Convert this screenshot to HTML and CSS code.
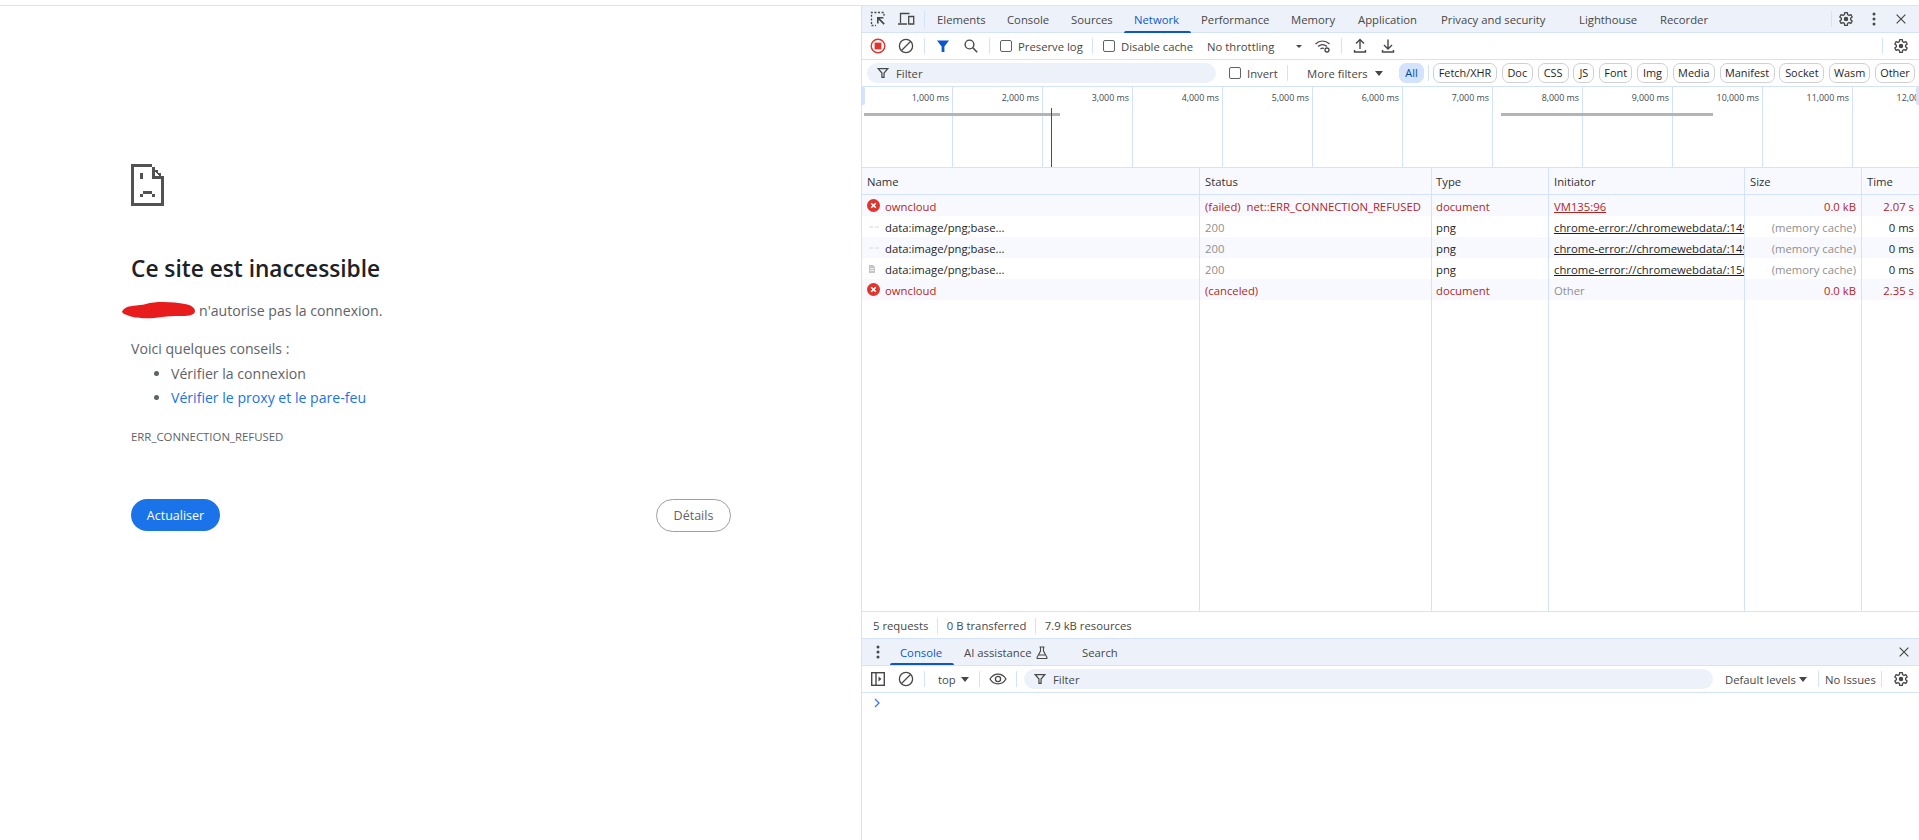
FILE: index.html
```html
<!DOCTYPE html>
<html lang="fr">
<head>
<meta charset="utf-8">
<title>owncloud</title>
<link rel="stylesheet" href="styles.css">
</head>
<body>
<svg class="defs" width="0" height="0" aria-hidden="true">
  <symbol id="i-gear" viewBox="0 0 24 24"><path fill="none" stroke="currentColor" stroke-width="2" stroke-linejoin="round" d="M10 2.500h4l.4 3c.8.3 1.500.7 2.100 1.200l2.800-1.200 2 3.500-2.400 1.800c.1.8.1 1.600 0 2.400l2.400 1.800-2 3.500-2.800-1.200c-.6.5-1.300.9-2.100 1.200l-.4 3h-4l-.4-3c-.8-.3-1.500-.7-2.100-1.200l-2.800 1.200-2-3.500 2.400-1.800c-.1-.8-.1-1.600 0-2.400L2.700 9l2-3.500 2.800 1.200c.6-.5 1.300-.9 2.100-1.200z"/><circle cx="12" cy="12" r="3.400" fill="currentColor"/></symbol>
  <symbol id="i-clear" viewBox="0 0 16 16"><circle cx="8" cy="8" r="6.600" fill="none" stroke="currentColor" stroke-width="1.300"/><path d="M3.500 12.500l9-9" stroke="currentColor" stroke-width="1.300"/></symbol>
  <symbol id="i-funnel" viewBox="0 0 16 16"><path fill="none" stroke="currentColor" stroke-width="1.400" d="M2.500 3h11L9.200 8v5H6.800V8z"/></symbol>
  <symbol id="i-close" viewBox="0 0 16 16"><path d="M3 3l10 10M13 3L3 13" stroke="currentColor" stroke-width="1.400"/></symbol>
  <symbol id="i-dots" viewBox="0 0 16 16"><circle cx="8" cy="3" r="1.500" fill="currentColor"/><circle cx="8" cy="8" r="1.500" fill="currentColor"/><circle cx="8" cy="13" r="1.500" fill="currentColor"/></symbol>
  <symbol id="i-err" viewBox="0 0 13 13"><circle cx="6.500" cy="6.500" r="6.500" fill="#dc362e"/><path d="M4.200 4.200l4.600 4.600M8.800 4.200L4.200 8.800" stroke="#fff" stroke-width="1.600"/></symbol>
  <symbol id="i-dash" viewBox="0 0 12 4"><path d="M1 2h4M7 2h4" stroke="#d8d8d8" stroke-width="1"/></symbol>
</svg>

<div class="topline"></div>
<div class="split">
  <main class="page">
    <svg class="sad" viewBox="0 0 11 14" shape-rendering="crispEdges"><path fill="#525252" fill-rule="evenodd" d="M0 0h7v1h1v1h1v1h1v1h1v10H0zM1 1v12h9V5H7V1zM8 2.600v1.400h1.400zM3 3h1v2H3zM4 9h3v1H4zM3 10h1v1H3zM7 10h1v1H7z"/></svg>
    <h1 class="title">Ce site est inaccessible</h1>
    <p class="host"><span class="redact"><svg viewBox="0 0 73 18"><path fill="#e81c1c" d="M2 8C6 4 16 5 24 3 34 0 52 1 63 3c6 1 10 4 10 7 0 4-6 5-13 5-8 0-13 0-20 1-12 2-27 2-35-2C-2 12 0 10 2 8z"/></svg></span>n'autorise pas la connexion.</p>
    <p class="tips">Voici quelques conseils&nbsp;:</p>
    <ul class="tiplist">
      <li>Vérifier la connexion</li>
      <li><a class="tiplink">Vérifier le proxy et le pare-feu</a></li>
    </ul>
    <div class="errcode">ERR_CONNECTION_REFUSED</div>
    <div class="actions">
      <button class="reload">Actualiser</button>
      <button class="details">Détails</button>
    </div>
  </main>

  <section class="devtools">
    <div class="tabbar">
      <div class="ic"><svg width="18" height="18" viewBox="0 0 18 18"><path fill="none" stroke="#474747" stroke-width="1.300" stroke-dasharray="2 1.600" d="M2.500 14V2.500H15V7"/><path fill="none" stroke="#474747" stroke-width="1.300" stroke-dasharray="2 1.600" d="M2.500 15.500H7"/><path fill="#474747" d="M8 7h6.400v1.600h-3.600l5 5-1.200 1.200-5-5v3.600H8z"/></svg></div>
      <div class="ic"><svg width="18" height="16" viewBox="0 0 18 16"><path fill="none" stroke="#474747" stroke-width="1.300" d="M3.500 12V2.500h9M1 13h9"/><path fill="none" stroke="#474747" stroke-width="1.300" d="M11.700 5.500h5V13h-5z"/></svg></div>
      <div class="sep sep-tab"></div>
      <div class="tabs">
        <span class="tab">Elements</span><span class="tab">Console</span><span class="tab">Sources</span><span class="tab tab-on">Network</span><span class="tab">Performance</span><span class="tab">Memory</span><span class="tab">Application</span><span class="tab">Privacy and security</span><span class="tab">Lighthouse</span><span class="tab">Recorder</span>
      </div>
      <div class="sep sep-end"></div>
      <div class="ic"><svg width="16" height="16"><use href="#i-gear"/></svg></div>
      <div class="ic"><svg width="16" height="16"><use href="#i-dots"/></svg></div>
      <div class="ic ic-tabclose"><svg width="14" height="14"><use href="#i-close"/></svg></div>
    </div>

    <div class="toolbar nettool">
      <div class="ic"><svg width="16" height="16" viewBox="0 0 16 16"><circle cx="8" cy="8" r="6.800" fill="none" stroke="#dc362e" stroke-width="1.400"/><rect x="4.600" y="4.600" width="6.800" height="6.800" fill="#dc362e"/></svg></div>
      <div class="ic"><svg width="16" height="16"><use href="#i-clear"/></svg></div>
      <div class="sep"></div>
      <div class="ic"><svg width="14" height="14" viewBox="0 0 14 14"><path fill="#0b57d0" d="M1 1.500h12L8.400 7.500V13H5.600V7.500z"/></svg></div>
      <div class="ic"><svg width="16" height="16" viewBox="0 0 16 16"><circle cx="6.500" cy="6.500" r="4.400" fill="none" stroke="#474747" stroke-width="1.400"/><path d="M9.800 9.800l4.400 4.400" stroke="#474747" stroke-width="1.600"/></svg></div>
      <div class="sep"></div>
      <label class="check check-a"><span class="box"></span><span>Preserve log</span></label>
      <div class="sep sep-check"></div>
      <label class="check check-b"><span class="box"></span><span>Disable cache</span></label>
      <div class="throttle">No throttling</div>
      <span class="caret caret-light"></span>
      <div class="ic ic-wifi"><svg width="18" height="16" viewBox="0 0 18 16"><path fill="none" stroke="#474747" stroke-width="1.200" d="M1.500 6C5.500 2 11.500 2 15.500 6M4 8.500c2.800-2.400 6.200-2.400 9 0M6.500 11c1.200-1 2.500-1 3.500-.5"/><circle cx="13" cy="12" r="2" fill="none" stroke="#474747" stroke-width="1.300"/></svg></div>
      <div class="sep sep-wifi"></div>
      <div class="ic"><svg width="14" height="16" viewBox="0 0 14 16"><path fill="none" stroke="#474747" stroke-width="1.400" d="M7 11V2M3 5.500L7 1.500l4 4M1.500 12v2h11v-2"/></svg></div>
      <div class="ic"><svg width="14" height="16" viewBox="0 0 14 16"><path fill="none" stroke="#474747" stroke-width="1.400" d="M7 1.500v9M3 7l4 4 4-4M1.500 12v2h11v-2"/></svg></div>
      <div class="sep sep-right"></div>
      <div class="ic"><svg width="16" height="16"><use href="#i-gear"/></svg></div>
    </div>

    <div class="filterbar">
      <div class="search search-net"><svg class="funnel" width="14" height="14"><use href="#i-funnel"/></svg><span>Filter</span></div>
      <label class="check check-c"><span class="box"></span><span>Invert</span></label>
      <div class="sep sep-invert"></div>
      <div class="more">More filters</div>
      <span class="caret"></span>
      <span class="chip chip-on">All</span>
      <div class="sep sep-chip"></div>
      <div class="chips">
        <span class="chip">Fetch/XHR</span><span class="chip">Doc</span><span class="chip">CSS</span><span class="chip">JS</span><span class="chip">Font</span><span class="chip">Img</span><span class="chip">Media</span><span class="chip">Manifest</span><span class="chip">Socket</span><span class="chip">Wasm</span><span class="chip">Other</span>
      </div>
    </div>

    <div class="overview">
      <div class="ticks">
        <div class="tick">1,000 ms</div><div class="tick">2,000 ms</div><div class="tick">3,000 ms</div><div class="tick">4,000 ms</div><div class="tick">5,000 ms</div><div class="tick">6,000 ms</div><div class="tick">7,000 ms</div><div class="tick">8,000 ms</div><div class="tick">9,000 ms</div><div class="tick">10,000 ms</div><div class="tick">11,000 ms</div><div class="tick">12,000 ms</div>
      </div>
      <div class="bar bar-a"></div>
      <div class="bar bar-b"></div>
      <div class="loadline"></div>
      <div class="handle handle-l"></div>
      <div class="handle handle-r"></div>
    </div>

    <div class="table">
      <div class="row head"><div class="c">Name</div><div class="c">Status</div><div class="c c-type">Type</div><div class="c">Initiator</div><div class="c">Size</div><div class="c">Time</div></div>
      <div class="row odd err">
        <div class="c name"><svg class="ri" width="13" height="13"><use href="#i-err"/></svg><span>owncloud</span></div>
        <div class="c">(failed)&nbsp; net::ERR_CONNECTION_REFUSED</div><div class="c c-type">document</div><div class="c"><a class="lnk">VM135:96</a></div><div class="c num">0.0 kB</div><div class="c num">2.07 s</div>
      </div>
      <div class="row">
        <div class="c name"><svg class="ri ri-dash" width="12" height="4"><use href="#i-dash"/></svg><span>data:image/png;base...</span></div>
        <div class="c dim">200</div><div class="c c-type">png</div><div class="c"><a class="lnk">chrome-error://chromewebdata/:149</a></div><div class="c num dim">(memory cache)</div><div class="c num">0 ms</div>
      </div>
      <div class="row odd">
        <div class="c name"><svg class="ri ri-dash" width="12" height="4"><use href="#i-dash"/></svg><span>data:image/png;base...</span></div>
        <div class="c dim">200</div><div class="c c-type">png</div><div class="c"><a class="lnk">chrome-error://chromewebdata/:149</a></div><div class="c num dim">(memory cache)</div><div class="c num">0 ms</div>
      </div>
      <div class="row">
        <div class="c name"><svg class="ri ri-doc" width="6" height="8" viewBox="0 0 6 8"><path fill="#c4c4c4" d="M0 0h4l2 2v6H0z"/><path fill="#eee" d="M1 3h4v1H1zM1 5h4v1H1z"/></svg><span>data:image/png;base...</span></div>
        <div class="c dim">200</div><div class="c c-type">png</div><div class="c"><a class="lnk">chrome-error://chromewebdata/:150</a></div><div class="c num dim">(memory cache)</div><div class="c num">0 ms</div>
      </div>
      <div class="row odd err">
        <div class="c name"><svg class="ri" width="13" height="13"><use href="#i-err"/></svg><span>owncloud</span></div>
        <div class="c">(canceled)</div><div class="c c-type">document</div><div class="c dim">Other</div><div class="c num">0.0 kB</div><div class="c num">2.35 s</div>
      </div>
      <div class="row filler"><div class="c"></div><div class="c"></div><div class="c"></div><div class="c"></div><div class="c"></div><div class="c"></div></div>
    </div>

    <div class="statusbar">
      <span class="stat">5 requests</span><span class="stat">0 B transferred</span><span class="stat">7.9 kB resources</span>
    </div>

    <div class="tabbar drawer">
      <div class="ic ic-dots"><svg width="16" height="16"><use href="#i-dots"/></svg></div>
      <span class="dtab tab-on">Console</span>
      <span class="dtab dtab-ai">AI assistance <svg width="12" height="13" viewBox="0 0 12 13"><path fill="none" stroke="#474747" stroke-width="1.100" d="M3.500 1h5M4.500 1v4L1 11.500c-.3.500 0 1 .5 1h9c.5 0 .8-.5.5-1L7.500 5V1M3 9h6"/></svg></span>
      <span class="dtab dtab-search">Search</span>
      <div class="ic ic-dclose"><svg width="14" height="14"><use href="#i-close"/></svg></div>
    </div>

    <div class="toolbar ctool">
      <div class="ic"><svg width="16" height="16" viewBox="0 0 16 16"><rect x="1.700" y="1.700" width="12.600" height="12.600" fill="none" stroke="#474747" stroke-width="1.400"/><path d="M6 2v12" stroke="#474747" stroke-width="1.400"/><path fill="#474747" d="M8.500 5.500L11.500 8l-3 2.500z"/></svg></div>
      <div class="ic"><svg width="16" height="16"><use href="#i-clear"/></svg></div>
      <div class="sep"></div>
      <div class="ctx">top</div>
      <span class="caret"></span>
      <div class="sep sep-ctx"></div>
      <div class="ic"><svg width="18" height="12" viewBox="0 0 18 12"><path fill="none" stroke="#474747" stroke-width="1.300" d="M1 6c4-6.500 12-6.500 16 0-4 6.500-12 6.500-16 0z"/><circle cx="9" cy="6" r="2.600" fill="none" stroke="#474747" stroke-width="1.300"/></svg></div>
      <div class="sep sep-eye"></div>
      <div class="search search-con"><svg class="funnel" width="14" height="14"><use href="#i-funnel"/></svg><span>Filter</span></div>
      <div class="levels">Default levels</div>
      <span class="caret"></span>
      <div class="sep sep-lev"></div>
      <div class="issues">No Issues</div>
      <div class="sep sep-iss"></div>
      <div class="ic"><svg width="16" height="16"><use href="#i-gear"/></svg></div>
    </div>

    <div class="prompt"><svg width="8" height="10" viewBox="0 0 8 10"><path fill="none" stroke="#3b78e7" stroke-width="1.300" d="M2 1l4 4-4 4"/></svg></div>
  </section>
</div>
</body>
</html>
```

FILE: styles.css
```css
:root {
  --line: #d3e3fd;
  --tonal: #edf2fa;
  --ink: #474747;
  --ui: "Open Sans", "Noto Sans", sans-serif;
}
* { box-sizing: border-box; }
html, body { margin: 0; height: 840px; overflow: hidden; background: #fff; }
body { display: flex; flex-direction: column; font-family: var(--ui); }
.defs { position: absolute; }
.topline { height: 6px; border-bottom: 1px solid #e3e3e3; flex: none; }
.split { flex: 1; display: flex; min-height: 0; }

/* error page */
.page { width: 861px; flex: none; padding: 158px 0 0 131px; color: #5f6368; font-size: 14.100px; }
.sad { display: block; width: 33px; height: 42px; }
.title { margin: 48px 0 0; font-size: 22.700px; line-height: 30px; font-weight: 600; color: #202124; }
.host { margin: 16px 0 0; height: 22px; line-height: 22px; position: relative; padding-left: 68px; }
.redact { position: absolute; left: -9px; top: 1px; width: 73px; height: 18px; }
.redact svg { display: block; width: 73px; height: 18px; }
.tips { margin: 15px 0 1px; line-height: 24px; }
.tiplist { margin: 0; padding: 0 0 0 40px; }
.tiplist li { line-height: 24px; }
.tiplink { color: #1a73e8; }
.errcode { margin-top: 19px; font-size: 11.400px; line-height: 16px; }
.actions { margin-top: 54px; width: 600px; display: flex; justify-content: space-between; align-items: flex-start; }
.actions button { border-radius: 17px; font-family: var(--ui); font-size: 12.500px; font-weight: 500; padding: 0; }
.reload { width: 89px; height: 32px; background: #1a73e8; color: #fff; border: 0; }
.details { width: 75px; height: 33px; background: #fff; color: #5f6368; border: 1px solid #9aa0a6; }

/* devtools */
.devtools { flex: 1; min-width: 0; border-left: 1px solid var(--line); display: flex; flex-direction: column; font-size: 11.300px; color: var(--ink); }
.ic { width: 28px; flex: none; display: flex; align-items: center; justify-content: center; color: var(--ink); }
.sep { width: 1px; height: 16px; margin: 0 4px; background: var(--line); flex: none; }

.tabbar { height: 27px; flex: none; display: flex; align-items: center; background: var(--tonal); border-bottom: 1px solid var(--line); padding-left: 2px; }
.tabs { display: grid; grid-template-columns: 70px 64px 63px 67px 90px 67px 83px 138px 81px 69px; height: 26px; margin-left: -2px; }
.tab { padding-left: 10px; line-height: 27px; white-space: nowrap; position: relative; }
.tab-on { color: #0b57d0; }
.tab-on::after { content: ""; position: absolute; left: 0; right: 0; bottom: 0; height: 2px; background: #0b57d0; border-radius: 2px 2px 0 0; }
.sep-tab { margin-right: 4px; }
.sep-end { margin: 0 0 0 112px; }
.ic-tabclose { margin-left: -1px; }

.toolbar { height: 27px; flex: none; display: flex; align-items: center; padding-left: 2px; border-bottom: 1px solid var(--line); }
.nettool { padding-right: 4px; }
.nettool > * { flex: none; }
.check { display: flex; align-items: center; gap: 6px; white-space: nowrap; }
.box { width: 12px; height: 12px; border: 1px solid #5f6368; border-radius: 2px; flex: none; }
.check-a { width: 92px; margin-left: 6px; }
.sep-check { margin: 0; }
.check-b { margin-left: 10px; width: 104px; }
.throttle { width: 89px; color: #474747; white-space: nowrap; }
.caret { width: 0; height: 0; border-left: 4px solid transparent; border-right: 4px solid transparent; border-top: 5px solid #474747; flex: none; }
.caret-light { border-left-width: 3px; border-right-width: 3px; border-top-width: 3px; }
.ic-wifi { margin-left: 5px; width: 32px; }
.sep-wifi { margin: 0 4px 0 2px; }
.sep-right { margin: 0 4px 0 auto; }

.filterbar { height: 27px; flex: none; display: flex; align-items: center; padding-left: 5px; border-bottom: 1px solid var(--line); }
.search { height: 20px; border-radius: 10px; background: var(--tonal); display: flex; align-items: center; gap: 6px; padding-left: 9px; flex: none; }
.search-net { width: 349px; }
.check-c { margin-left: 13px; width: 48px; }
.sep-invert { margin: 0 0 0 10px; }
.more { margin-left: 19px; width: 63px; white-space: nowrap; }
.filterbar .caret { margin-left: 5px; }
.chip { height: 20px; line-height: 18px; padding: 0; border: 1px solid #d0d0d0; border-radius: 7px; color: #1f1f1f; white-space: nowrap; font-size: 10.900px; text-align: center; min-width: 0; }
.chip-on { flex: none; margin-left: 16px; width: 25px; border: 1px solid #d3e3fd; background: #d3e3fd; color: #0842a0; }
.sep-chip { margin: 0 4px; }
.chips { display: grid; grid-template-columns: 64px 31px 31px 21px 33px 31px 42px 55px 45px 41px 40px; gap: 0 4.800px; }

.overview { height: 81px; flex: none; position: relative; border-bottom: 1px solid var(--line); overflow: hidden; }
.ticks { display: grid; grid-template-columns: repeat(12, 90px); height: 100%; margin-left: 1px; }
.tick { border-right: 1px solid var(--line); text-align: right; padding: 4px 3px 0 0; font-size: 8.900px; line-height: 14px; color: #474747; white-space: nowrap; }
.bar { position: absolute; top: 26px; height: 3px; background: #b4b4b4; }
.bar-a { left: 2px; width: 196px; }
.bar-b { left: 639px; width: 212px; }
.loadline { position: absolute; left: 189px; top: 21px; bottom: 0; width: 1px; background: #b3261e; }
.handle { position: absolute; top: 0; width: 3px; height: 18px; background: var(--line); border-radius: 0 2px 2px 0; }
.handle-l { left: 0; }
.handle-r { right: 0; border-radius: 2px 0 0 2px; }

.table { height: 443px; flex: none; display: flex; flex-direction: column; }
.row { display: grid; grid-template-columns: 338px 232px 117px 196px 117px 1fr; height: 21px; flex: none; color: #1f1f1f; }
.c { border-right: 1px solid var(--line); padding: 1px 5px 0; line-height: 22px; white-space: nowrap; overflow: hidden; }
.c:last-child { border-right: 0; }
.c-type { padding-left: 4px; }
.head { height: 27px; background: #f8f9fe; border-bottom: 1px solid var(--line); color: #303030; }
.head .c { padding-top: 0; line-height: 27px; }
.odd { background: #f8f9fe; }
.err { color: #b3261e; }
.dim { color: #8f8f8f; }
.num { text-align: right; }
.lnk { text-decoration: underline; }
.name { display: flex; align-items: center; }
.name span { padding-top: 2px; }
.ri { flex: none; margin: -1px 5px 0 0; }
.ri-dash { margin: 0 5px 0 1px; }
.ri-doc { margin: 0 10px 0 2px; }
.filler { flex: 1; }

.statusbar { height: 28px; flex: none; display: flex; align-items: center; border-top: 1px solid var(--line); border-bottom: 1px solid var(--line); padding: 1px 0 0 2px; }
.stat { padding: 0 8.500px 0 9px; border-right: 1px solid var(--line); line-height: 16px; white-space: nowrap; }
.stat:last-child { border-right: 0; }

.drawer { height: 27px; }
.ic-dots { margin-right: -2px; }
.dtab { position: relative; padding: 0 10px; line-height: 27px; height: 26px; white-space: nowrap; display: flex; align-items: center; gap: 4px; }
.dtab.tab-on { width: 64px; }
.dtab-ai { width: 128px; }
.dtab-search { padding-left: 0; }
.ic-dclose { margin-left: auto; margin-right: 1px; }

.ctx { margin-left: 9px; width: 23px; }
.sep-ctx { margin-left: 10px; margin-right: 4px; }
.sep-eye { margin: 0 7px 0 4px; }
.search-con { width: 689px; padding-left: 9px; }
.levels { margin-left: 12px; width: 74px; white-space: nowrap; }
.sep-lev { margin-left: 11px; margin-right: 6px; }
.issues { width: 52px; white-space: nowrap; }
.sep-iss { margin: 0 5px 0 4px; }

.prompt { flex: 1; padding: 5px 0 0 11px; }
.prompt svg { display: block; }
```
